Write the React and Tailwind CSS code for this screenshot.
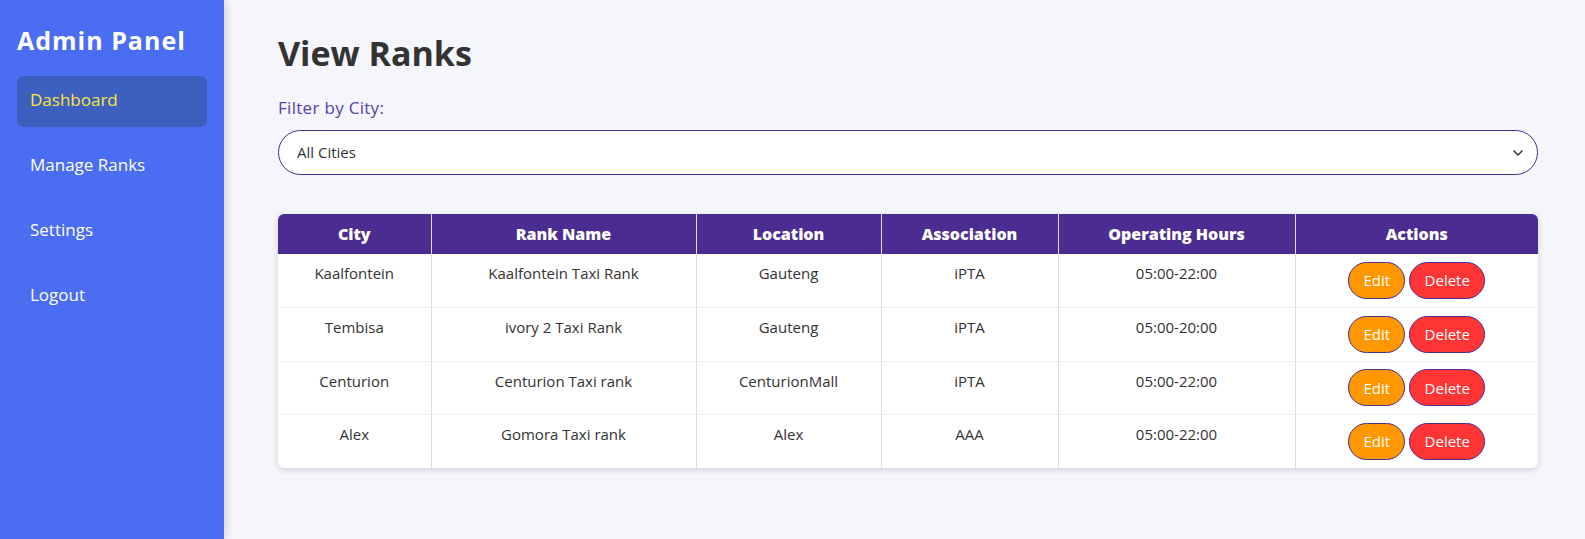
import React, { useState } from 'react';

const ranks = [
  { id: 1, city: 'Kaalfontein', name: 'Kaalfontein Taxi Rank', location: 'Gauteng', association: 'iPTA', hours: '05:00-22:00' },
  { id: 2, city: 'Tembisa', name: 'ivory 2 Taxi Rank', location: 'Gauteng', association: 'iPTA', hours: '05:00-20:00' },
  { id: 3, city: 'Centurion', name: 'Centurion Taxi rank', location: 'CenturionMall', association: 'iPTA', hours: '05:00-22:00' },
  { id: 4, city: 'Alex', name: 'Gomora Taxi rank', location: 'Alex', association: 'AAA', hours: '05:00-22:00' },
];

const navItems = ['Dashboard', 'Manage Ranks', 'Settings', 'Logout'];

const Sidebar = () => (
  <aside className="w-[224px] shrink-0 bg-[#4a6df2] text-white px-[17px] pt-[25px] shadow-[3px_0_8px_rgba(0,0,0,0.12)] z-10">
    <h2 className="text-[25px] font-bold tracking-[1px] leading-[30px] mb-[21px]">Admin Panel</h2>
    <nav className="flex flex-col">
      {navItems.map((item, i) => (
        <a
          key={item}
          href="#"
          className={
            i === 0
              ? 'h-[51px] flex items-center px-[13px] pb-[3px] rounded-md bg-[#3d5fbd] text-[#f9e640] text-[17px] mb-[14px]'
              : 'h-[51px] flex items-center px-[13px] pb-[3px] rounded-md text-white text-[17px] mb-[14px]'
          }
        >
          {item}
        </a>
      ))}
    </nav>
  </aside>
);

export default function App() {
  const [city, setCity] = useState('');
  const cities = [...new Set(ranks.map(r => r.city))];
  const shown = ranks.filter(r => !city || r.city === city);

  return (
    <div className="flex h-[539px] bg-[#f4f6fb] font-['Open_Sans',sans-serif] text-[#333]">
      <Sidebar />
      <main className="flex-1 pl-[54px] pr-[47px] pt-[30px]">
        <h1 className="text-[34px] font-bold leading-[46px] text-[#333]">View Ranks</h1>
        <label className="block mt-[21px] text-[17px] tracking-[0.3px] leading-[22px] text-[#5b3ea8]">Filter by City:</label>
        <div className="relative mt-[11px]">
          <select
            value={city}
            onChange={e => setCity(e.target.value)}
            className="w-full h-[45px] appearance-none rounded-full border border-[#4b2d91] bg-white pl-[18px] text-[15px] text-[#333] outline-none"
          >
            <option value="">All Cities</option>
            {cities.map(c => <option key={c} value={c}>{c}</option>)}
          </select>
          <svg className="absolute right-[15px] top-1/2 -translate-y-1/2 pointer-events-none" width="10" height="6" viewBox="0 0 10 6" fill="none">
            <path d="M1 1l4 4 4-4" stroke="#333" strokeWidth="1.5" strokeLinecap="round" strokeLinejoin="round" />
          </svg>
        </div>

        <div className="mt-[39px] rounded-md bg-white shadow-[0_2px_6px_rgba(0,0,0,0.15)] overflow-hidden">
          <table className="w-full table-fixed border-collapse text-[15px]">
            <colgroup>
              <col className="w-[153px]" />
              <col className="w-[265px]" />
              <col className="w-[185px]" />
              <col className="w-[177px]" />
              <col className="w-[237px]" />
              <col />
            </colgroup>
            <thead>
              <tr className="bg-[#4b2d91] text-white h-[40px]">
                {['City', 'Rank Name', 'Location', 'Association', 'Operating Hours', 'Actions'].map((h, i) => (
                  <th key={h} className={i < 5 ? 'font-extrabold text-[16px] border-r border-[#ddd]' : 'font-extrabold text-[16px]'}>{h}</th>
                ))}
              </tr>
            </thead>
            <tbody>
              {shown.map((r, idx) => (
                <tr key={r.id} className={idx < shown.length - 1 ? 'h-[53.5px] border-b border-[#eee]' : 'h-[53.5px]'}>
                  <td className="align-top text-center pt-[8px] border-r border-[#ddd]">{r.city}</td>
                  <td className="align-top text-center pt-[8px] border-r border-[#ddd]">{r.name}</td>
                  <td className="align-top text-center pt-[8px] border-r border-[#ddd]">{r.location}</td>
                  <td className="align-top text-center pt-[8px] border-r border-[#ddd]">{r.association}</td>
                  <td className="align-top text-center pt-[8px] border-r border-[#ddd]">{r.hours}</td>
                  <td className="align-middle text-center">
                    <div className="flex justify-center gap-[4px]">
                      <button className="h-[37px] w-[57px] rounded-full border border-[#4b2d91] bg-[#ff9800] text-white text-[15px]">Edit</button>
                      <button className="h-[37px] w-[76px] rounded-full border border-[#4b2d91] bg-[#ff3535] text-white text-[15px]">Delete</button>
                    </div>
                  </td>
                </tr>
              ))}
            </tbody>
          </table>
        </div>
      </main>
    </div>
  );
}
